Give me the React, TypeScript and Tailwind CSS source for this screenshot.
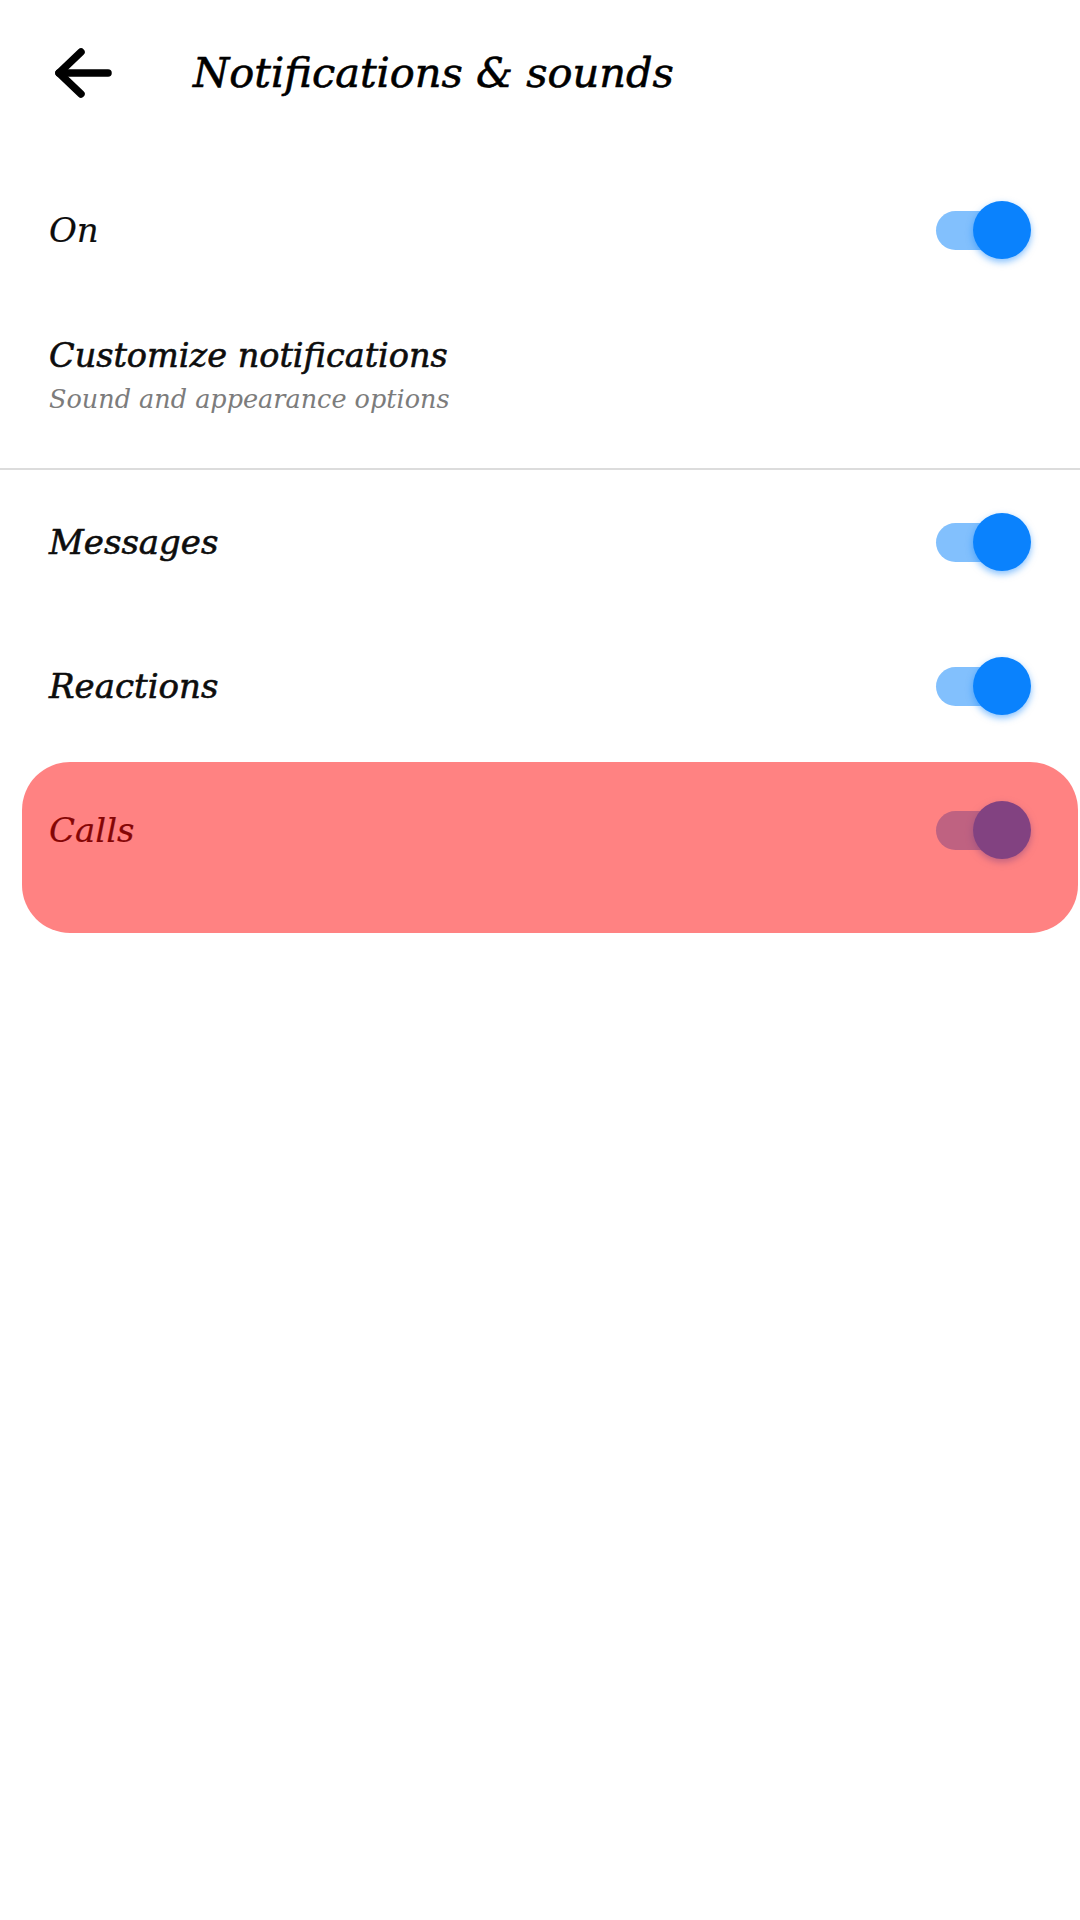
import React from "react";

function Toggle() {
  return (
    <div className="relative h-[58px] w-[95px] shrink-0">
      <div className="absolute left-0 top-[10px] h-[39px] w-[80px] rounded-full bg-[#82c0fd]" />
      <div className="absolute right-0 top-0 h-[58px] w-[58px] rounded-full bg-[#0a82fd] shadow-[0_3px_7px_rgba(10,130,253,0.5)]" />
    </div>
  );
}

function ToggleRow({ label, height, heavy }: { label: string; height: string; heavy?: boolean }) {
  return (
    <div className={`flex items-center justify-between pl-[49px] pr-[49px] ${height}`}>
      <span
        className={
          heavy
            ? "text-[34px] leading-[44px] text-[#0d0d0d] [-webkit-text-stroke:0.6px_#0d0d0d]"
            : "text-[34px] leading-[44px] text-[#0d0d0d] [-webkit-text-stroke:0.2px_#0d0d0d]"
        }
      >
        {label}
      </span>
      <Toggle />
    </div>
  );
}

export default function App() {
  return (
    <div className="relative min-h-[1920px] w-[1080px] bg-white font-['DejaVu_Serif',serif] italic">
      <header className="flex h-[146px] items-center pl-[50px]">
        <svg width="62" height="56" viewBox="0 0 62 56" fill="none" stroke="#000" strokeWidth="7.5" strokeLinecap="round" strokeLinejoin="round">
          <path d="M58 28H9" />
          <path d="M31 7L9 28l22 21" />
        </svg>
        <h1 className="ml-[81px] text-[41.5px] leading-[52px] text-black [-webkit-text-stroke:0.6px_#000]">
          Notifications &amp; sounds
        </h1>
      </header>

      <ToggleRow label="On" height="h-[168px]" />

      <div className="flex h-[154px] flex-col pl-[49px] pt-[20px]">
        <span className="text-[33.5px] leading-[44px] text-[#0d0d0d] [-webkit-text-stroke:0.6px_#0d0d0d]">
          Customize notifications
        </span>
        <span className="mt-[3px] text-[25.5px] leading-[36px] text-[#7c7c7c]">Sound and appearance options</span>
      </div>

      <div className="h-[2px] bg-[#dcdcdc]" />

      <ToggleRow label="Messages" height="h-[144px]" heavy />
      <ToggleRow label="Reactions" height="h-[144px]" heavy />
      <ToggleRow label="Calls" height="h-[144px]" />

      <div className="absolute left-[22px] top-[762px] h-[171px] w-[1056px] rounded-[48px] bg-[rgba(255,0,0,0.49)]" />
    </div>
  );
}
